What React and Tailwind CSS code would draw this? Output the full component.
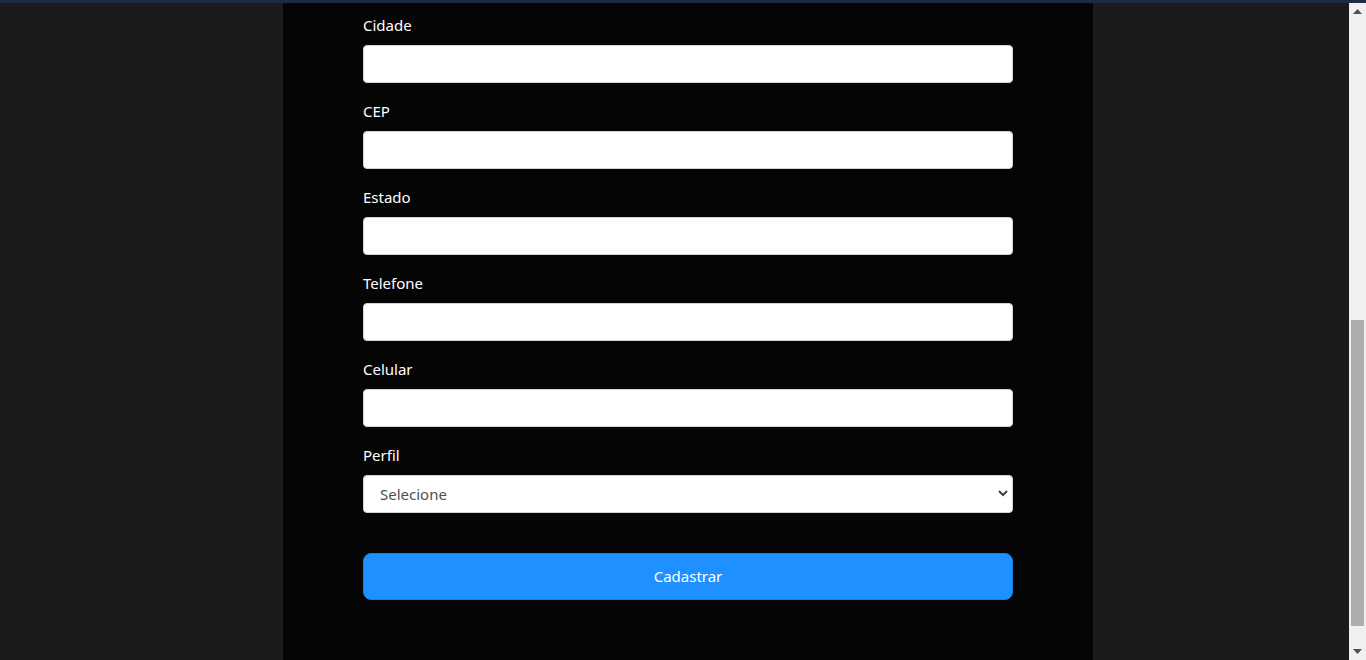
import React from "react";

const fields = ["Cidade", "CEP", "Estado", "Telefone", "Celular"];

const Scrollbar = () => (
  <div className="w-[17px] bg-[#f0f0f0] flex flex-col items-center">
    <div className="h-[17px] flex items-center justify-center">
      <svg width="9" height="5" viewBox="0 0 9 5">
        <path d="M4.5 0 L9 5 L0 5 Z" fill="#505050" />
      </svg>
    </div>
    <div className="flex-1 w-full flex flex-col pt-[300px] pb-[17px] px-[2px]">
      <div className="h-[306px] w-full bg-[#adadad]" />
    </div>
    <div className="h-[17px] flex items-center justify-center">
      <svg width="9" height="5" viewBox="0 0 9 5">
        <path d="M0 0 L9 0 L4.5 5 Z" fill="#505050" />
      </svg>
    </div>
  </div>
);

export default function App() {
  return (
    <div
      className="h-[660px] w-[1366px] overflow-hidden bg-[#1c1b1c] flex flex-col"
      style={{ fontFamily: '"Noto Sans", "Open Sans", sans-serif' }}
    >
      <div className="h-[3px] bg-[#1f2945]" />
      <div className="flex flex-1">
        <div className="flex-1 flex">
          <div className="ml-[283px] w-[810px] bg-[#050505] px-[80px] pt-[10px]">
            <form className="flex flex-col" onSubmit={(e) => e.preventDefault()}>
              {fields.map((f) => (
                <div key={f} className="flex flex-col mb-4">
                  <label className="text-white text-[15px] leading-6 mb-2">{f}</label>
                  <input
                    type="text"
                    className="h-[38px] w-full bg-white rounded-[4px] border border-[#ced4da] px-3"
                  />
                </div>
              ))}
              <div className="flex flex-col">
                <label className="text-white text-[15px] leading-6 mb-2">Perfil</label>
                <div className="relative h-[38px] w-full bg-white rounded-[4px] border border-[#ced4da] flex items-center pl-[16px]">
                  <span className="text-[#495057] text-[15px]">Selecione</span>
                  <svg
                    className="absolute right-[4px] top-[13px]"
                    width="10"
                    height="8"
                    viewBox="0 0 10 8"
                  >
                    <path d="M1 2 L5 6 L9 2" fill="none" stroke="#3c4043" strokeWidth="2" />
                  </svg>
                </div>
              </div>
              <button
                type="submit"
                className="mt-10 h-[47px] w-full rounded-lg bg-[#1e90ff] border border-[#1a7ee0] text-white text-[15px]"
              >
                Cadastrar
              </button>
            </form>
          </div>
        </div>
        <Scrollbar />
      </div>
    </div>
  );
}
